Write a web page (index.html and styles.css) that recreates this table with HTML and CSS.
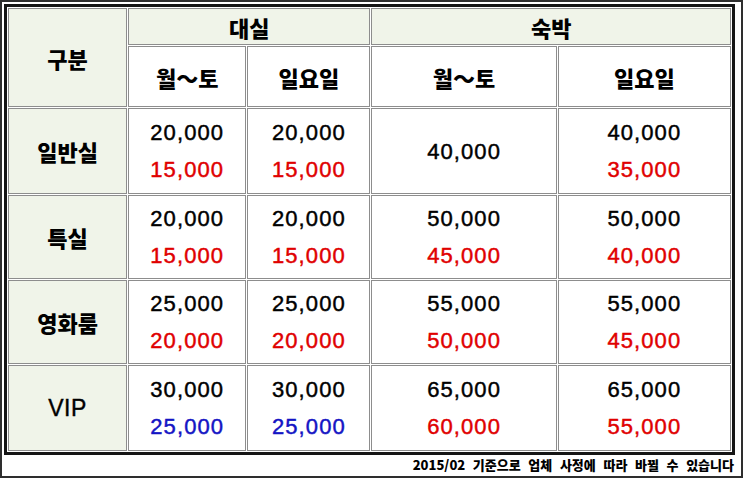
FILE: index.html
```html
<!DOCTYPE html>
<html lang="ko">
<head>
<meta charset="utf-8">
<title>요금표</title>
<link rel="stylesheet" href="styles.css">
</head>
<body>
<div class="frame">
  <table class="price">
    <colgroup>
      <col class="c1"><col class="c2"><col class="c3"><col class="c4"><col class="c5">
    </colgroup>
    <tr class="r1">
      <th class="hd" rowspan="2">구분</th>
      <th class="hd" colspan="2">대실</th>
      <th class="hd" colspan="2">숙박</th>
    </tr>
    <tr class="r2">
      <th class="sub">월～토</th>
      <th class="sub">일요일</th>
      <th class="sub">월～토</th>
      <th class="sub">일요일</th>
    </tr>
    <tr class="r3">
      <th class="hd">일반실</th>
      <td><span class="n">20,000</span><span class="n red">15,000</span></td>
      <td><span class="n">20,000</span><span class="n red">15,000</span></td>
      <td><span class="n">40,000</span></td>
      <td><span class="n">40,000</span><span class="n red">35,000</span></td>
    </tr>
    <tr class="r4">
      <th class="hd">특실</th>
      <td><span class="n">20,000</span><span class="n red">15,000</span></td>
      <td><span class="n">20,000</span><span class="n red">15,000</span></td>
      <td><span class="n">50,000</span><span class="n red">45,000</span></td>
      <td><span class="n">50,000</span><span class="n red">40,000</span></td>
    </tr>
    <tr class="r5">
      <th class="hd">영화룸</th>
      <td><span class="n">25,000</span><span class="n red">20,000</span></td>
      <td><span class="n">25,000</span><span class="n red">20,000</span></td>
      <td><span class="n">55,000</span><span class="n red">50,000</span></td>
      <td><span class="n">55,000</span><span class="n red">45,000</span></td>
    </tr>
    <tr class="r6">
      <th class="hd vip">VIP</th>
      <td><span class="n">30,000</span><span class="n blue">25,000</span></td>
      <td><span class="n">30,000</span><span class="n blue">25,000</span></td>
      <td><span class="n">65,000</span><span class="n red">60,000</span></td>
      <td><span class="n">65,000</span><span class="n red">55,000</span></td>
    </tr>
  </table>
  <p class="note">2015/02 기준으로 업체 사정에 따라 바뀔 수 있습니다</p>
</div>
</body>
</html>
```

FILE: styles.css
```css
html, body {
  margin: 0;
  padding: 0;
  background: #fff;
}

.frame {
  box-sizing: border-box;
  width: 743px;
  height: 478px;
  border: 2px solid #2e2e2e;
  padding: 2px 7px 0 2px;
  background: #fff;
}

.price {
  box-sizing: border-box;
  width: 731px;
  table-layout: fixed;
  border-collapse: separate;
  border-spacing: 1px;
  border: 3px solid #151515;
  background: #fff;
}

.c1 { width: 119px; }
.c2 { width: 118px; }
.c3 { width: 123px; }
.c4 { width: 185px; }
.c5 { width: 173px; }

.price th,
.price td {
  box-sizing: border-box;
  border: 1px solid #8d8d8d;
  padding: 0;
  text-align: center;
  vertical-align: middle;
}

.r1 { height: 37px; }
.r2 { height: 61px; }
.r3 { height: 86px; }
.r4 { height: 84px; }
.r5 { height: 84px; }
.r6 { height: 86px; }

.hd,
.sub {
  font-family: "Noto Sans CJK KR", "Noto Sans", sans-serif;
  font-weight: 900;
  font-size: 22px;
  color: #000;
}

.hd { background: #f0f4e9; }
.sub { background: #fff; }

.vip {
  font-family: "Liberation Sans", Arial, sans-serif;
  font-weight: 400;
  font-size: 23px;
  letter-spacing: 0.5px;
  -webkit-text-stroke: 0.4px #000;
}

.n {
  display: block;
  font-family: "Liberation Sans", Arial, sans-serif;
  font-size: 22px;
  letter-spacing: 1.1px;
  line-height: 37px;
  color: #000;
  -webkit-text-stroke: 0.45px currentColor;
}

.red { color: #e00000; }
.blue { color: #1414c4; }

.note {
  margin: 2px 0 0 0;
  text-align: right;
  font-family: "Noto Sans CJK KR", "Noto Sans", sans-serif;
  font-weight: 900;
  font-size: 13px;
  line-height: 16px;
  word-spacing: 4px;
  color: #000;
}
```
